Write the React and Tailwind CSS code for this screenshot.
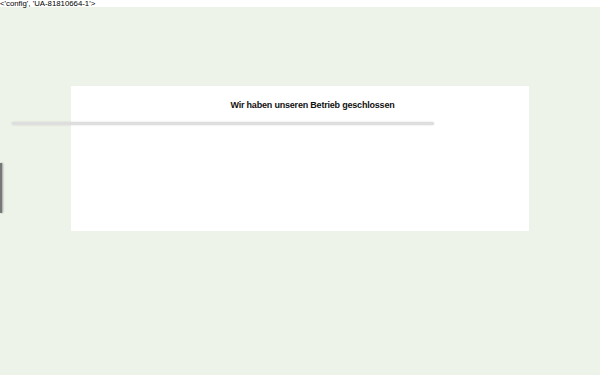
import React from 'react';

const App = () => {
  return (
    <div className="relative w-[600px] h-[375px] overflow-hidden bg-[#edf3e9] font-['Liberation_Sans',sans-serif]">
      {/* stray analytics text at the top */}
      <div className="h-[7px] bg-white">
        <p className="text-[7.8px] leading-[7px] text-black whitespace-nowrap">{"<'config', 'UA-81810664-1'>"}</p>
      </div>

      <div className="pt-[79px] pl-[71px]">
        <div className="w-[458px] h-[145px] bg-white pt-[12px]">
          <h1 className="text-center text-[9px] leading-[14px] font-bold tracking-[-0.2px] text-[#111] pl-[25px]">
            Wir haben unseren Betrieb geschlossen
          </h1>
        </div>
      </div>

      {/* loader track overlapping the card */}
      <div className="absolute left-[12px] top-[122px] w-[422px] h-[3px] rounded-full bg-[#dedede] shadow-[0_0_2px_rgba(0,0,0,0.15)]" />

      {/* side tab edge */}
      <div className="absolute left-0 top-[163px] w-[2px] h-[50px] bg-[#777] shadow-[1px_0_2px_rgba(0,0,0,0.35)]" />
    </div>
  );
};

export default App;
